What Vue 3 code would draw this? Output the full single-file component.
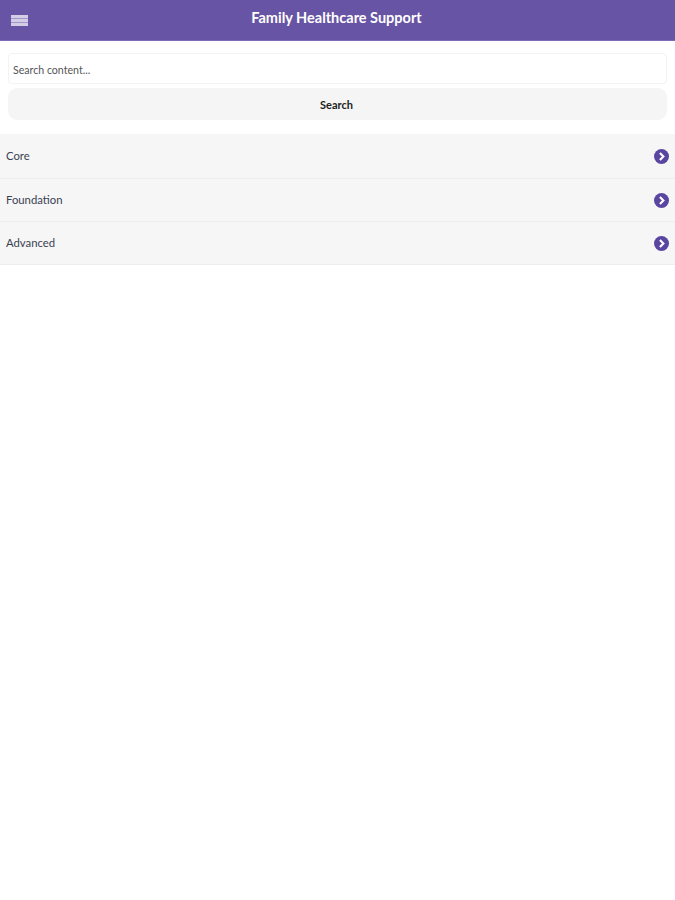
<template>
  <div class="page">
    <header class="topbar">
      <button class="menu-btn" aria-label="Menu">
        <span></span><span></span><span></span>
      </button>
      <h1 class="title">Family Healthcare Support</h1>
    </header>

    <form class="search" @submit.prevent>
      <input class="search-input" type="text" placeholder="Search content..." />
      <button class="search-btn" type="submit">Search</button>
    </form>

    <ul class="list">
      <li v-for="item in items" :key="item" class="row">
        <span class="row-label">{{ item }}</span>
        <svg class="row-icon" width="15" height="15" viewBox="0 0 16 16">
          <circle cx="8" cy="8" r="8" fill="#5a45a0" />
          <path d="M6.3 4.2 L10 8 L6.3 11.8" fill="none" stroke="#fff" stroke-width="2.3" />
        </svg>
      </li>
    </ul>
  </div>
</template>

<script setup>
const items = ['Core', 'Foundation', 'Advanced']
</script>

<style>
html, body {
  background: #fff;
}
</style>

<style scoped>
* {
  box-sizing: border-box;
}

.page {
  min-height: 900px;
  font-family: Lato, "Open Sans", sans-serif;
  background: #fff;
}

.topbar {
  position: relative;
  height: 41px;
  display: flex;
  align-items: center;
  justify-content: center;
  background: #6854a4;
  border-bottom: 1px solid #7d6bb5;
}

.menu-btn {
  position: absolute;
  left: 11px;
  top: 15px;
  width: 17px;
  height: 11px;
  padding: 0;
  border: 0;
  background: #a397c9;
  display: flex;
  flex-direction: column;
  justify-content: space-between;
}

.menu-btn span {
  display: block;
  height: 3px;
  background: #d3cde6;
}

.title {
  margin: 0 2px 5px 0;
  font-size: 14.5px;
  font-weight: 700;
  color: #fff;
}

.search {
  padding: 12px 8px 14px;
  display: flex;
  flex-direction: column;
  gap: 4px;
}

.search-input {
  height: 31px;
  width: 100%;
  padding: 3px 4px 0;
  border: 1px solid #f3f3f3;
  border-radius: 4px;
  font-family: inherit;
  font-size: 10.6px;
  color: #444;
  background: #fff;
}

.search-input::placeholder {
  color: #555;
  opacity: 1;
}

.search-btn {
  height: 32px;
  width: 100%;
  padding: 0 2px 0 0;
  border: 0;
  border-radius: 9px;
  background: #f5f5f5;
  font-family: inherit;
  font-size: 11px;
  font-weight: 700;
  color: #222;
}

.list {
  margin: 0;
  padding: 0;
  list-style: none;
}

.row {
  height: 43px;
  padding: 0 6px;
  display: flex;
  align-items: center;
  justify-content: space-between;
  background: #f6f6f6;
  border-bottom: 1px solid #eeeeee;
}

.row:first-child {
  height: 45px;
}

.row-label {
  margin-bottom: 2px;
  font-size: 11.3px;
  color: #3a4252;
}

.row-icon {
  display: block;
}
</style>
